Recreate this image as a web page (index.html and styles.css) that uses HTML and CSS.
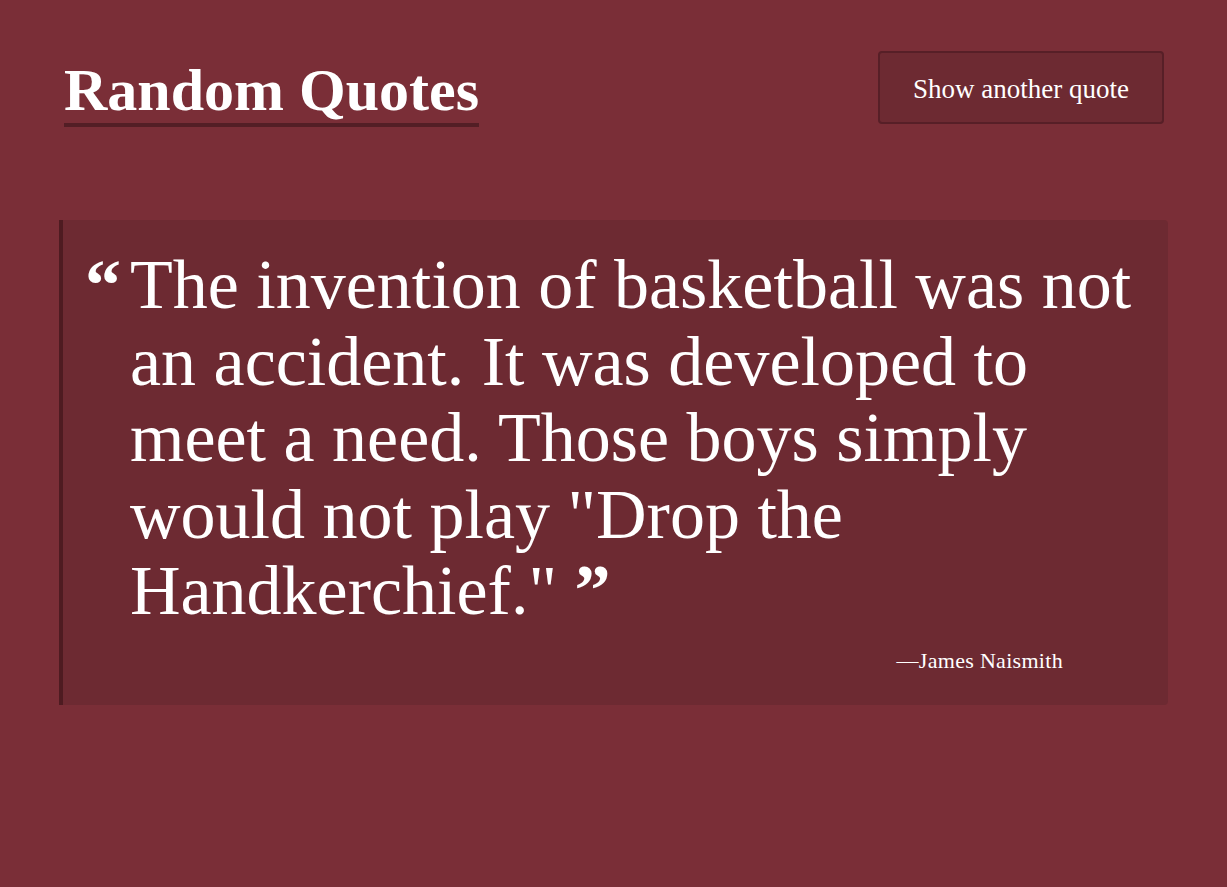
FILE: index.html
```html
<!DOCTYPE html>
<html lang="en">
<head>
<meta charset="utf-8">
<title>Random Quotes</title>
<link rel="stylesheet" href="styles.css">
</head>
<body>
<div class="page">
  <header class="header">
    <h1 class="title">Random Quotes</h1>
    <button class="btn" type="button">Show another quote</button>
  </header>
  <main class="card">
    <div class="quote-row">
      <span class="mark-open">&ldquo;</span>
      <p class="quote-text">The invention of basketball was not an accident. It was developed to meet a need. Those boys simply would not play "Drop the Handkerchief."&nbsp;<span class="mark-close">&rdquo;</span></p>
    </div>
    <p class="author">&mdash;James Naismith</p>
  </main>
</div>
</body>
</html>
```
FILE: styles.css
```css
html, body {
  margin: 0;
  padding: 0;
}
body {
  background: #7a2e37;
  color: #ffffff;
  font-family: "Liberation Serif", "Times New Roman", serif;
  min-height: 887px;
}
.page {
  padding: 0 59px;
}
.header {
  display: flex;
  justify-content: space-between;
  align-items: flex-start;
  padding: 0 4px 0 5px;
}
.title {
  margin: 57px 0 0 0;
  font-size: 60px;
  line-height: 66px;
  font-weight: 700;
  border-bottom: 4px solid #531e25;
}
.btn {
  margin-top: 51px;
  width: 286px;
  height: 73px;
  background: #6d2a32;
  color: #ffffff;
  border: 2px solid #571f27;
  border-radius: 4px;
  font-family: "Liberation Serif", "Times New Roman", serif;
  font-size: 27px;
  padding: 3px 0 0 0;
}
.card {
  margin-top: 93px;
  background: #6d2a32;
  border-left: 4px solid #4e1b21;
  border-radius: 0 4px 4px 0;
  padding: 27px 17px 30px 22px;
}
.quote-row {
  display: flex;
  align-items: flex-start;
}
.mark-open {
  flex: 0 0 45px;
  font-size: 72px;
  font-weight: 700;
  line-height: 76.6px;
}
.quote-text {
  margin: 0;
  font-size: 70px;
  line-height: 76.6px;
}
.mark-close {
  font-size: 72px;
  font-weight: 700;
  line-height: 1;
}
.author {
  margin: 17px 88px 0 0;
  text-align: right;
  font-size: 22px;
  line-height: 28px;
  letter-spacing: 0.3px;
}
```
